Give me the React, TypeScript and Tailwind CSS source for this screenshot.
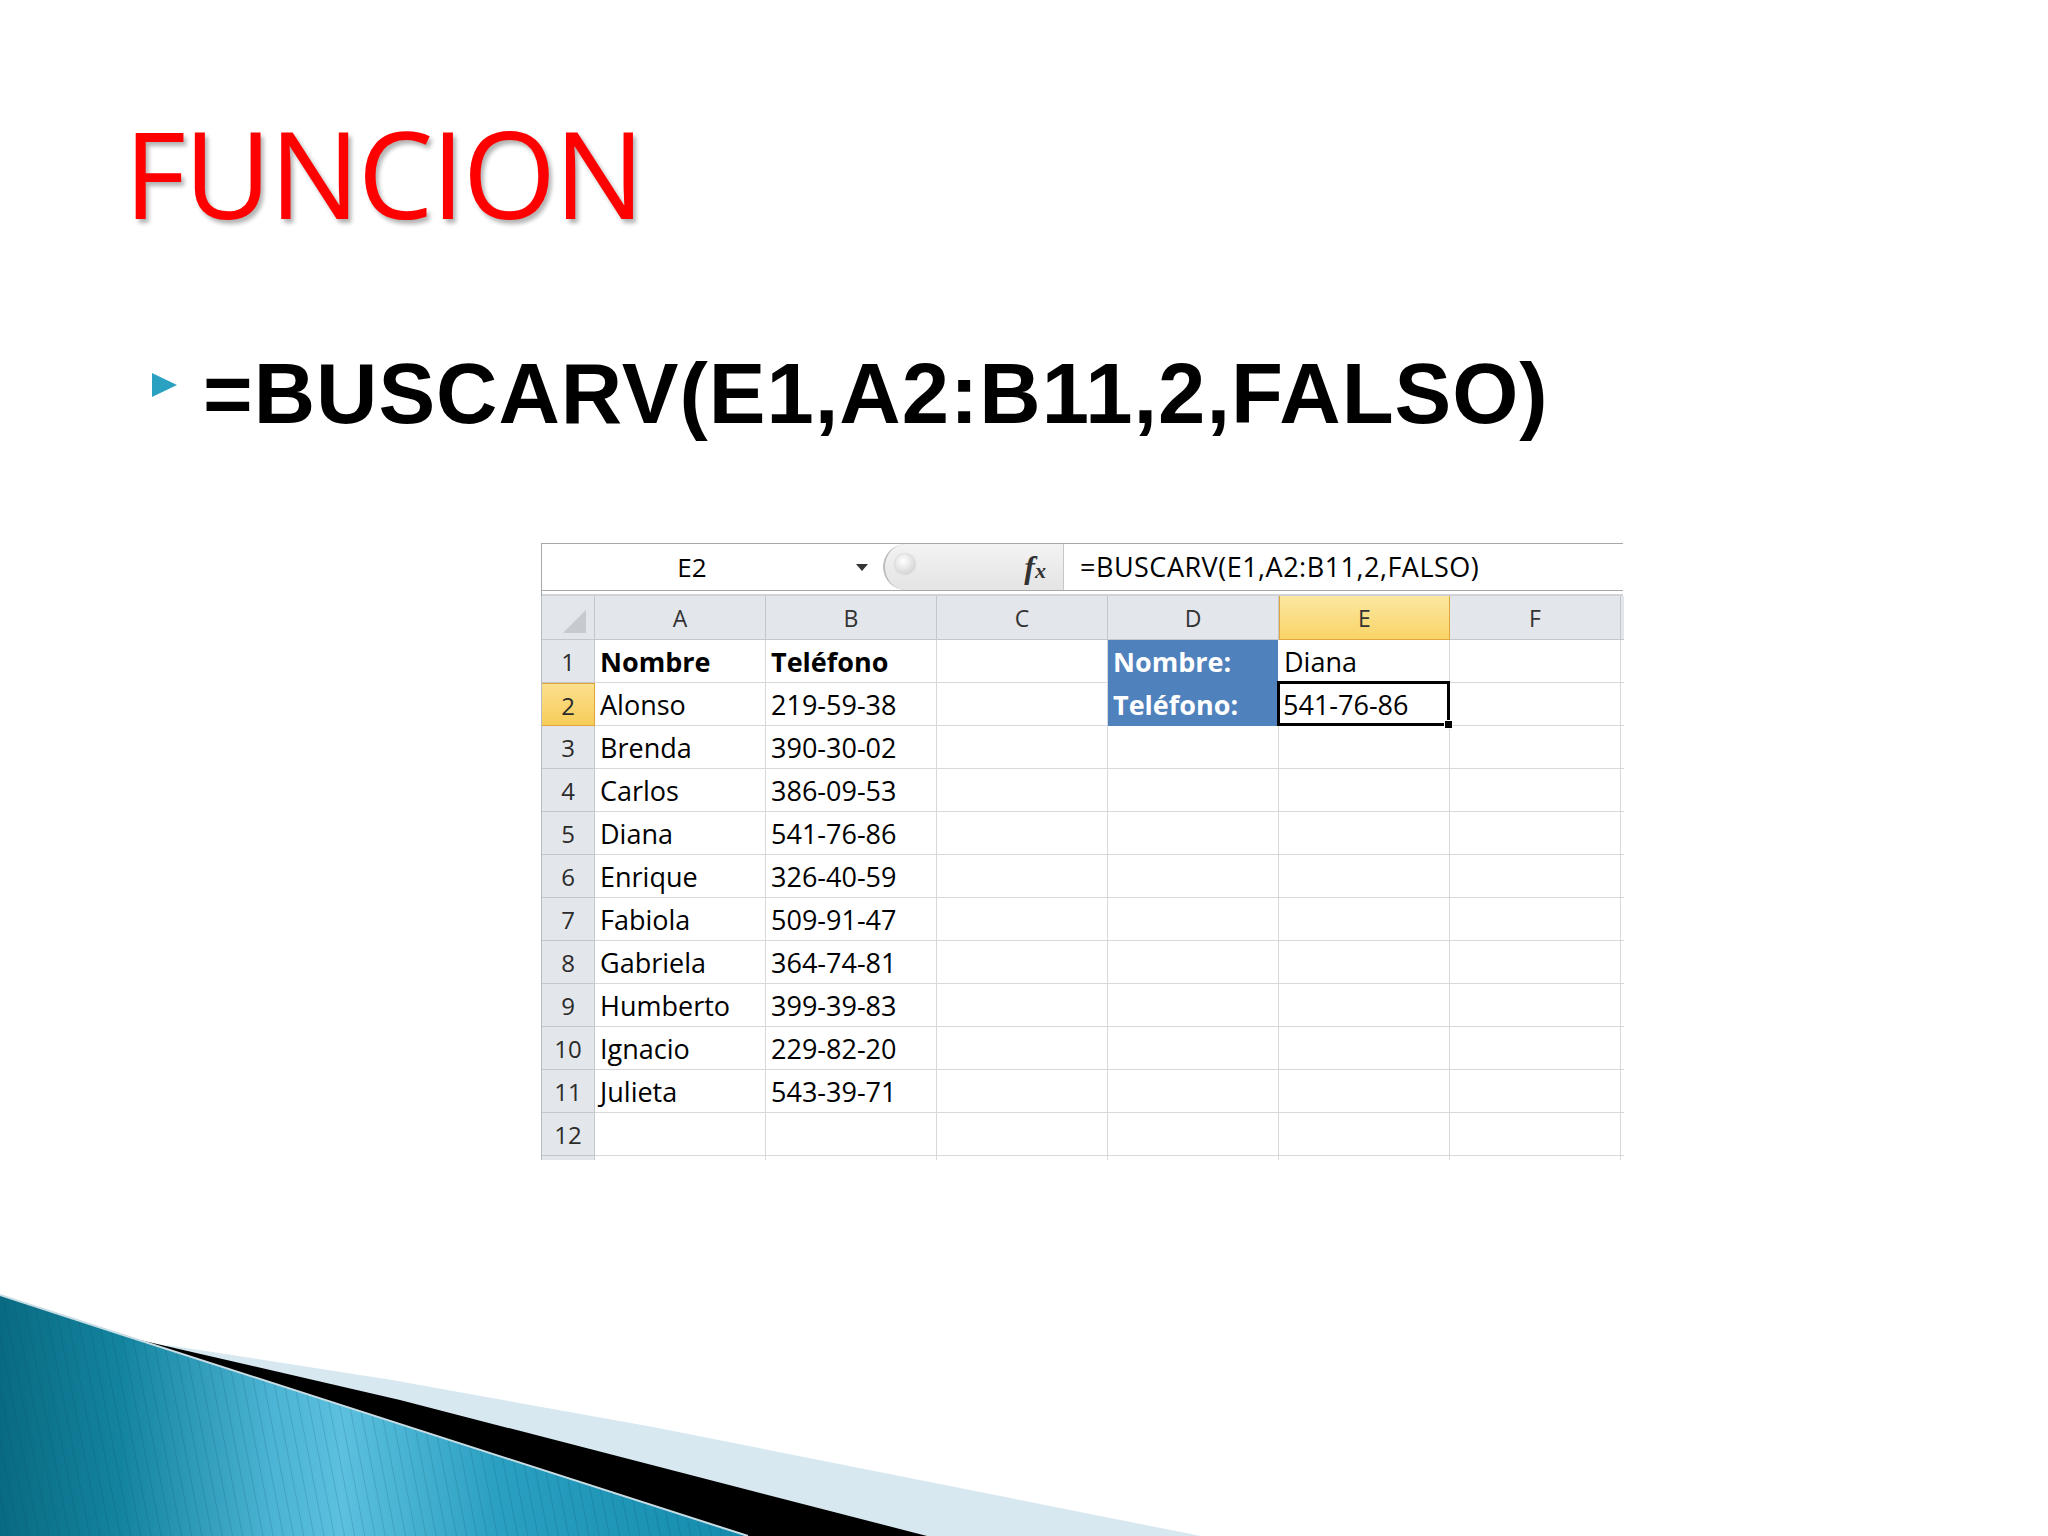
import React from "react";

const people = [
  ["Alonso", "219-59-38"],
  ["Brenda", "390-30-02"],
  ["Carlos", "386-09-53"],
  ["Diana", "541-76-86"],
  ["Enrique", "326-40-59"],
  ["Fabiola", "509-91-47"],
  ["Gabriela", "364-74-81"],
  ["Humberto", "399-39-83"],
  ["Ignacio", "229-82-20"],
  ["Julieta", "543-39-71"],
];

const cols = ["A", "B", "C", "D", "E", "F"];

function RowHead({ n, active }: { n: string; active?: boolean }) {
  return (
    <div
      className={
        active
          ? "w-[53px] shrink-0 border-y border-r border-[#e2a53c] bg-gradient-to-b from-[#fbe08c] to-[#f7cc58] pt-[2px] text-center text-[24px] leading-[39px] text-[#2b2b2b]"
          : "w-[53px] shrink-0 border-r border-b border-[#c3c7cc] bg-[#e3e6ea] pt-[2px] text-center text-[24px] leading-[40px] text-[#2b2b2b]"
      }
    >
      {n}
    </div>
  );
}

function Cell({ children, bold, blue }: { children?: React.ReactNode; bold?: boolean; blue?: boolean }) {
  return (
    <div
      className={
        "w-[171px] shrink-0 border-r border-b px-[5px] pt-[2px] text-[27px] leading-[40px] whitespace-nowrap " +
        (blue ? "bg-[#4f81bd] border-b-[#4f81bd] text-white font-bold" : "border-[#d8d9db] text-black") +
        (bold && !blue ? " font-bold" : "")
      }
    >
      {children}
    </div>
  );
}

function Edge() {
  return <div className="w-[3px] shrink-0 border-b border-[#d8d9db]" />;
}

function Sheet() {
  return (
    <div className="w-[1082px] font-['Open_Sans',sans-serif]">
      {/* formula bar */}
      <div className="flex h-[48px] items-stretch border-y border-l border-[#a8a8a8] bg-white">
        <div className="flex w-[300px] items-center justify-center text-[26px] text-black">E2</div>
        <div className="flex w-[41px] items-center pl-[14px]">
          <div className="h-0 w-0 border-x-[6px] border-t-[7px] border-x-transparent border-t-[#333]" />
        </div>
        <div className="relative flex w-[181px] items-center justify-end rounded-l-full border-l-2 border-r border-l-[#bdbdbd] border-r-[#c6c6c6] bg-gradient-to-b from-[#f3f3f3] to-[#e4e4e4] pr-[17px]">
          <div className="absolute left-[10px] top-[10px] h-[20px] w-[20px] rounded-full bg-[radial-gradient(circle_at_40%_35%,#ffffff,#c9c9c9)] shadow-[0_0_2px_#aaa]" />
          <span className="font-['Liberation_Serif',serif] text-[32px] font-bold italic leading-none text-[#333]">
            f<span className="text-[22px]">x</span>
          </span>
        </div>
        <div className="flex items-center pl-[16px] text-[27px] tracking-[0.5px] text-black">=BUSCARV(E1,A2:B11,2,FALSO)</div>
      </div>
      <div className="h-[3px] border-l border-[#a8a8a8] bg-white" />
      <div className="h-[2px] border-l border-[#a8a8a8] bg-[#cfd2d6]" />

      <div className="border-l border-[#b7bcc2]">
        {/* column headers */}
        <div className="flex h-[44px]">
          <div className="flex w-[53px] shrink-0 items-end justify-end border-r border-b border-[#c3c7cc] bg-[#e3e6ea] pr-[8px] pb-[6px]">
            <svg width="23" height="23" viewBox="0 0 23 23">
              <polygon points="23,0 23,23 0,23" fill="#c6cace" />
            </svg>
          </div>
          {cols.map((c) =>
            c === "E" ? (
              <div
                key={c}
                className="w-[171px] shrink-0 border-x border-b border-[#e2a53c] bg-gradient-to-b from-[#fce7a0] to-[#f9d466] pt-[2px] text-center text-[23px] leading-[40px] text-[#333]"
              >
                {c}
              </div>
            ) : (
              <div
                key={c}
                className="w-[171px] shrink-0 border-r border-b border-[#c3c7cc] bg-[#e3e6ea] pt-[2px] text-center text-[23px] leading-[41px] text-[#333]"
              >
                {c}
              </div>
            )
          )}
          <div className="w-[3px] shrink-0 border-b border-[#c3c7cc] bg-[#e3e6ea]" />
        </div>

        {/* row 1 */}
        <div className="flex h-[43px]">
          <RowHead n="1" />
          <Cell bold>Nombre</Cell>
          <Cell bold>Teléfono</Cell>
          <Cell />
          <Cell blue>Nombre:</Cell>
          <Cell>Diana</Cell>
          <Cell />
          <Edge />
        </div>

        {/* row 2 */}
        <div className="flex h-[43px]">
          <RowHead n="2" active />
          <Cell>{people[0][0]}</Cell>
          <Cell>{people[0][1]}</Cell>
          <Cell />
          <Cell blue>Teléfono:</Cell>
          <div className="relative w-[171px] shrink-0 border-r border-b border-[#d8d9db] px-[4px] pt-[2px] text-[27px] leading-[40px] text-black">
            541-76-86
            <div className="absolute -left-[2px] -top-[2px] -right-[1px] -bottom-[1px] border-[3px] border-black" />
            <div className="absolute -right-[4px] -bottom-[4px] h-[9px] w-[9px] border border-white bg-black" />
          </div>
          <Cell />
          <Edge />
        </div>

        {people.slice(1).map(([name, tel], i) => (
          <div key={name} className="flex h-[43px]">
            <RowHead n={String(i + 3)} />
            <Cell>{name}</Cell>
            <Cell>{tel}</Cell>
            <Cell />
            <Cell />
            <Cell />
            <Cell />
            <Edge />
          </div>
        ))}

        <div className="flex h-[43px]">
          <RowHead n="12" />
          <Cell />
          <Cell />
          <Cell />
          <Cell />
          <Cell />
          <Cell />
          <Edge />
        </div>
        <div className="flex h-[4px]">
          <div className="w-[53px] shrink-0 border-r border-[#c3c7cc] bg-[#e3e6ea]" />
          {cols.map((c) => (
            <div key={c} className="w-[171px] shrink-0 border-r border-[#d8d9db]" />
          ))}
        </div>
      </div>
    </div>
  );
}

function Swoosh() {
  return (
    <svg className="absolute bottom-0 left-0" width="1260" height="250" viewBox="0 0 1260 250">
      <defs>
        <linearGradient id="teal" x1="0" y1="0" x2="760" y2="0" gradientUnits="userSpaceOnUse">
          <stop offset="0" stopColor="#0a6a83" />
          <stop offset="0.16" stopColor="#13849f" />
          <stop offset="0.36" stopColor="#4cb4d4" />
          <stop offset="0.45" stopColor="#5cc0de" />
          <stop offset="0.66" stopColor="#2a9fc1" />
          <stop offset="1" stopColor="#138aab" />
        </linearGradient>
        <pattern id="lines" width="10" height="10" patternUnits="userSpaceOnUse" patternTransform="rotate(-11)">
          <rect x="0" y="0" width="1" height="10" fill="#05465a" opacity="0.18" />
        </pattern>
      </defs>
      <polygon points="167,59 392,94 653,141 1201,250 0,250" fill="#d7e8f0" />
      <polygon points="105,46 400,114 927,250 0,250" fill="#000" />
      <polygon points="0,9 117,47 748,250 0,250" fill="url(#teal)" />
      <polygon points="0,9 117,47 748,250 0,250" fill="url(#lines)" />
      <polyline points="0,9 117,47 748,250" fill="none" stroke="#c9dde4" strokeWidth="2" />
    </svg>
  );
}

export default function App() {
  return (
    <div className="relative h-[1536px] w-[2048px] overflow-hidden bg-white">
      <div className="pl-[124px] pt-[113px]">
        <h1 className="font-['Open_Sans',sans-serif] text-[120px] font-medium leading-none tracking-[-2px] text-[#f00] [text-shadow:3px_4px_4px_rgba(0,0,0,0.3)]">
          FUNCION
        </h1>
      </div>

      <div className="mt-[118px] flex items-start pl-[152px]">
        <div className="mt-[22px] h-0 w-0 border-y-[12.5px] border-l-[25px] border-y-transparent border-l-[#2ba1c2]" />
        <div className="ml-[26px] font-['Liberation_Sans',Arial,sans-serif] text-[85px] font-bold leading-none tracking-[1px] text-black">
          =BUSCARV(E1,A2:B11,2,FALSO)
        </div>
      </div>

      <div className="mt-[107px] pl-[541px]">
        <Sheet />
      </div>

      <Swoosh />
    </div>
  );
}
